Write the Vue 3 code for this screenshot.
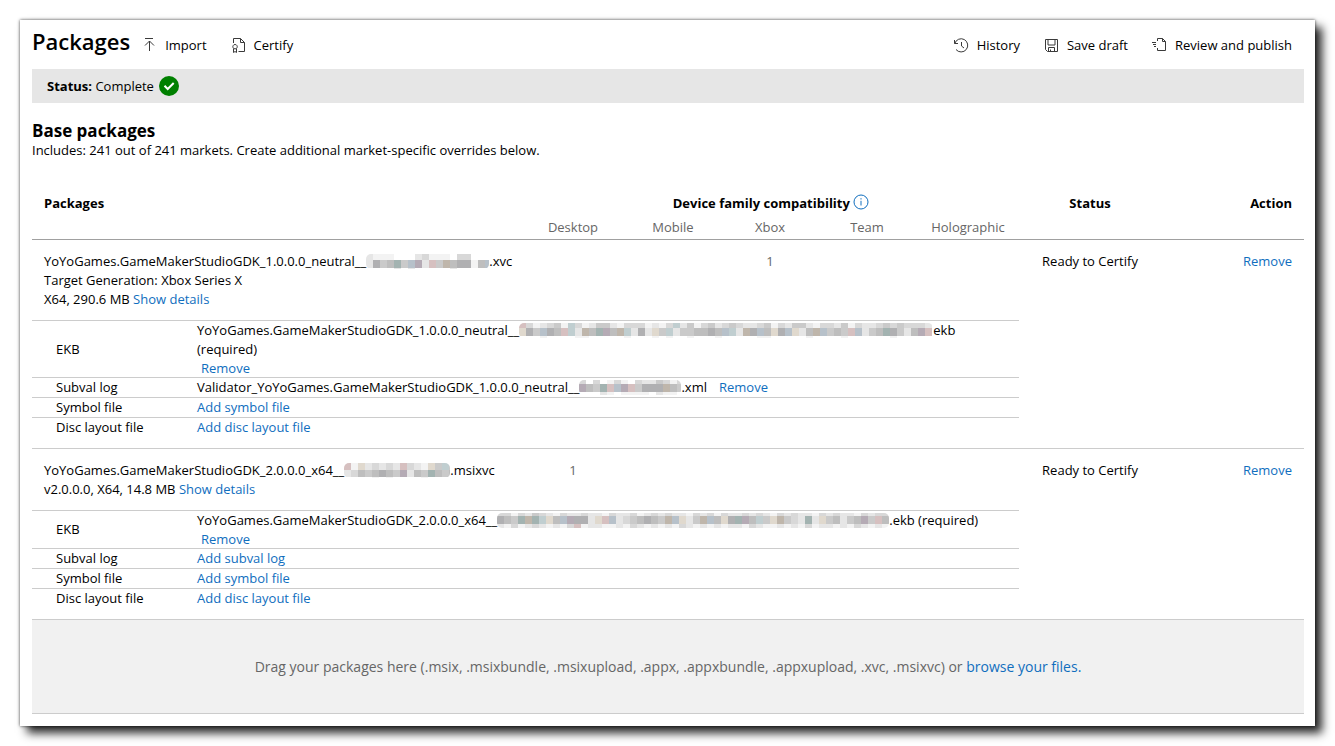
<template>
  <main class="panel">
    <header class="toolbar">
      <h1 class="title">Packages</h1>

      <button v-for="a in leftActions" :key="a.label" class="tool" type="button">
        <svg class="tool__icon" viewBox="0 0 15 15"><path :d="a.icon" /></svg>
        {{ a.label }}
      </button>

      <div class="toolbar__right">
        <button v-for="a in rightActions" :key="a.label" class="tool" type="button">
          <svg class="tool__icon" viewBox="0 0 15 15"><path :d="a.icon" /></svg>
          {{ a.label }}
        </button>
      </div>
    </header>

    <div class="status-bar">
      <b>Status:</b>&nbsp;Complete
      <svg class="check" viewBox="0 0 20 20">
        <circle cx="10" cy="10" r="10" fill="#008000" />
        <path d="M5.5 9.8l3.2 3.2 6-6" fill="none" stroke="#fff" stroke-width="2" />
      </svg>
    </div>

    <h2 class="subtitle">Base packages</h2>
    <p class="intro">Includes: 241 out of 241 markets. Create additional market-specific overrides below.</p>

    <table class="packages">
      <colgroup>
        <col />
        <col class="col-device" />
        <col class="col-device" />
        <col class="col-xbox" />
        <col class="col-device" />
        <col class="col-holo" />
        <col class="col-status" />
        <col class="col-action" />
      </colgroup>
      <thead>
        <tr class="head">
          <th class="left">Packages</th>
          <th colspan="5">
            Device family compatibility
            <svg class="info" viewBox="0 0 16 16">
              <circle cx="8" cy="8" r="7" />
              <path d="M8 6.8v4.7M8 4.2v1.3" />
            </svg>
          </th>
          <th>Status</th>
          <th class="right">Action</th>
        </tr>
        <tr class="devices">
          <th></th>
          <th v-for="d in devices" :key="d">{{ d }}</th>
          <th></th>
          <th></th>
        </tr>
      </thead>

      <tbody v-for="pkg in packages" :key="pkg.name">
        <tr class="package">
          <td class="left">
            <div class="nowrap">
              {{ pkg.name }}<svg class="mosaic" :width="pkg.mask.width" height="15">
                <rect v-for="(c, i) in cells(pkg.mask)" :key="i" v-bind="c" />
              </svg>{{ pkg.ext }}
            </div>
            <div v-if="pkg.target">{{ pkg.target }}</div>
            <div>{{ pkg.info }} <a href="#">Show details</a></div>
          </td>
          <td v-for="d in devices" :key="d" class="count">{{ pkg.device === d ? 1 : '' }}</td>
          <td>Ready to Certify</td>
          <td class="right"><a href="#">Remove</a></td>
        </tr>
        <tr>
          <td class="nested" colspan="6">
            <table class="files">
              <tbody>
                <tr v-for="f in pkg.files" :key="f.label">
                  <th scope="row">{{ f.label }}</th>
                  <td v-if="f.name">
                    <span>{{ f.name }}</span><svg class="mosaic" :width="f.mask.width" height="15">
                      <rect v-for="(c, i) in cells(f.mask)" :key="i" v-bind="c" />
                    </svg><span>{{ f.ext }}</span>
                    <span v-if="f.required">{{ ' ' }}(required)</span>
                    <a href="#" :class="f.required ? 'remove' : 'remove-inline'">Remove</a>
                  </td>
                  <td v-else><a href="#">{{ f.add }}</a></td>
                </tr>
              </tbody>
            </table>
          </td>
          <td colspan="2"></td>
        </tr>
      </tbody>
    </table>

    <div class="dropzone">
      <p>
        Drag your packages here (.msix, .msixbundle, .msixupload, .appx, .appxbundle, .appxupload, .xvc, .msixvc) or
        <a href="#">browse your files.</a>
      </p>
    </div>
  </main>
</template>

<script setup>
const leftActions = [
  { label: 'Import', icon: 'M3 .5h8M7.500 13V3M3 7.500L7.500 3l4.500 4.500' },
  { label: 'Certify', icon: 'M2.500 5V.5h7l4 4v9H7.500M9.500.5v4h4M4 6.500a2.200 2.200 0 1 0 .1 0zM2.500 10.500v4l1.500-1 1.500 1v-4' },
]

const rightActions = [
  { label: 'History', icon: 'M.5 2v3.500h3.500M.8 5.500A6.600 6.600 0 1 1 2 11.500M7.500 4v4l2.500 2' },
  { label: 'Save draft', icon: 'M1.500 1.500h12v12H3.500l-2-2zM4 1.500v5.500h7V1.500M4.500 13.500v-4h6v4M6.500 11.500v2' },
  { label: 'Review and publish', icon: 'M5.500 3V.5h5l3 3v9h-8V10M10.500.5v3h3M0 4.500h4M1 6.500h3M2 8.500h2' },
]

const devices = ['Desktop', 'Mobile', 'Xbox', 'Team', 'Holographic']

// Shades used to obscure the publisher id, "w" leaves the cell empty
const shades = {
  a: '#b0b0b2', b: '#bebebe', c: '#cacaca', d: '#d8d8d8', e: '#e6e6e6', f: '#f3f3f3',
  p: '#d6c0c0', q: '#b5abb5', g: '#c0ced0', t: '#a3b3b1', s: '#b7c1ca', y: '#e0d9ce', k: '#bfb6ab',
}

const masks = {
  xvc: {
    width: 123,
    rows: ['efffwwwedfffwddwww', 'eacbtcsqepckbaafbs', 'wwwwewewwwwwewwwww'],
    heights: [6, 8, 1],
  },
  ekb1: {
    width: 414,
    rows: [
      'pdfedcfgdfeccefdddfefdgecfdcedcdeedcfdeccefddecfdeedcdcddde',
      'yacsabpgekbtqbkgeaeycgeccbbabsgekasbyasyebkscbcpsecbtacebqp',
      'wwwfwwwwffwwwwwfwwwfwfwwfwwwfwwwwwffwwwwwfwwwwfwwwwwwfwwwww',
    ],
    heights: [5, 8, 2],
  },
  xml: {
    width: 102,
    rows: ['dwdwfdfwdeecdfd', 'qbctpsqpcaaakbc', 'wwwefwffffweffw'],
    heights: [4, 8, 3],
  },
  msixvc: {
    width: 106,
    rows: ['pfyededepdefycgc', 'edbcbabcqebctbcb', 'wwwwfwfwwwwfwwww'],
    heights: [7, 7, 1],
  },
  ekb2: {
    width: 392,
    rows: [
      'ddfdecdefdeedeefdeedfededeefdedfdeededefdedeefdedeefdedd',
      'abctktgybsqaaeypsedcbabcksyecksbyatqbgcykcdeteycbecbqcpb',
      'efdfedefefdpfeeffefdefefefdefefefeefdeffefefdfeefefdefef',
    ],
    heights: [3, 8, 4],
  },
}

function cells(mask) {
  const out = []
  let y = 0
  mask.rows.forEach((row, r) => {
    row.split('').forEach((key, i) => {
      if (shades[key]) {
        out.push({ x: i * 7, y, width: 7, height: mask.heights[r], fill: shades[key] })
      }
    })
    y += mask.heights[r]
  })
  return out
}

const packages = [
  {
    name: 'YoYoGames.GameMakerStudioGDK_1.0.0.0_neutral__',
    mask: masks.xvc,
    ext: '.xvc',
    target: 'Target Generation: Xbox Series X',
    info: 'X64, 290.6 MB',
    device: 'Xbox',
    files: [
      { label: 'EKB', name: 'YoYoGames.GameMakerStudioGDK_1.0.0.0_neutral__', mask: masks.ekb1, ext: 'ekb', required: true },
      { label: 'Subval log', name: 'Validator_YoYoGames.GameMakerStudioGDK_1.0.0.0_neutral__', mask: masks.xml, ext: '.xml' },
      { label: 'Symbol file', add: 'Add symbol file' },
      { label: 'Disc layout file', add: 'Add disc layout file' },
    ],
  },
  {
    name: 'YoYoGames.GameMakerStudioGDK_2.0.0.0_x64__',
    mask: masks.msixvc,
    ext: '.msixvc',
    info: 'v2.0.0.0, X64, 14.8 MB',
    device: 'Desktop',
    files: [
      { label: 'EKB', name: 'YoYoGames.GameMakerStudioGDK_2.0.0.0_x64__', mask: masks.ekb2, ext: '.ekb', required: true },
      { label: 'Subval log', add: 'Add subval log' },
      { label: 'Symbol file', add: 'Add symbol file' },
      { label: 'Disc layout file', add: 'Add disc layout file' },
    ],
  },
]
</script>

<style>
body {
  background: #fff;
}
</style>

<style scoped>
.panel {
  margin: 20px;
  padding: 0 11px 12px 12px;
  background: #fff;
  box-shadow: 7px 7px 9px rgba(0, 0, 0, 0.85), 0 0 3px rgba(0, 0, 0, 0.7);
  font-family: 'Segoe UI', 'Open Sans', sans-serif;
  font-size: 13px;
  line-height: 19px;
  color: #000;
}

a {
  color: #106ebe;
  text-decoration: none;
}

a:hover { text-decoration: underline; }

.toolbar {
  display: flex;
  align-items: center;
  gap: 24px;
  height: 49px;
  padding-right: 12px;
}

.title {
  margin: 0 -12px 8px 0;
  font-size: 22px;
  line-height: 28px;
  font-weight: 600;
}

.toolbar__right {
  display: flex;
  gap: 24px;
  margin-left: auto;
}

.tool {
  display: flex;
  align-items: center;
  gap: 8px;
  padding: 2px 0 0;
  border: none;
  background: none;
  font: inherit;
  color: inherit;
  cursor: pointer;
}

.tool__icon {
  width: 15px;
  height: 15px;
  fill: none;
  stroke: #3a3a3a;
  stroke-width: 1;
}

.status-bar {
  display: flex;
  align-items: center;
  height: 34px;
  padding-left: 15px;
  background: #e6e6e6;
}

.check {
  width: 20px;
  height: 20px;
  margin-left: 5px;
}

.subtitle {
  margin: 17px 0 0;
  font-size: 17px;
  line-height: 21px;
  font-weight: 700;
}

.intro { margin: 0; }

.packages {
  width: 100%;
  margin-top: 34px;
  border-collapse: separate;
  border-spacing: 0;
  table-layout: fixed;
}

.col-device { width: 100px; }
.col-xbox { width: 94px; }
.col-holo { width: 102px; }
.col-status { width: 142px; }
.col-action { width: 143px; }

th,
td {
  padding: 0;
  text-align: center;
  vertical-align: top;
}

.packages .left {
  padding-left: 12px;
  text-align: left;
}

.packages .right {
  padding-right: 12px;
  text-align: right;
}

.head th {
  height: 24px;
  font-weight: 700;
}

.info {
  width: 16px;
  height: 16px;
  vertical-align: top;
  fill: none;
  stroke: #106ebe;
}

.devices th {
  height: 21px;
  border-bottom: 1px solid #a0a0a0;
  font-weight: 400;
  color: #666;
}

.package td {
  padding-top: 12px;
  padding-bottom: 11px;
}

.package .count { color: #666; }

.nowrap { white-space: nowrap; }

.mosaic {
  height: 15px;
  border-radius: 5px;
  overflow: hidden;
  vertical-align: -3px;
}

.nested { padding-bottom: 11px; }

.files {
  width: 100%;
  border-collapse: separate;
  border-spacing: 0;
}

.files th,
.files td {
  border-top: 1px solid #ccc;
  text-align: left;
  vertical-align: middle;
}

.files th {
  width: 141px;
  padding-left: 24px;
  font-weight: 400;
}

.files td { padding-right: 24px; }

.remove {
  display: block;
  margin-left: 4px;
  line-height: 18px;
}

.remove-inline { margin-left: 12px; }

tbody + tbody .package td { border-top: 1px solid #ccc; }

.dropzone {
  display: flex;
  align-items: center;
  justify-content: center;
  height: 93px;
  border-top: 1px solid #ccc;
  border-bottom: 1px solid #ccc;
  background: #f1f1f1;
  font-size: 14px;
  color: #666;
}

.dropzone p { margin: 0; }
</style>
